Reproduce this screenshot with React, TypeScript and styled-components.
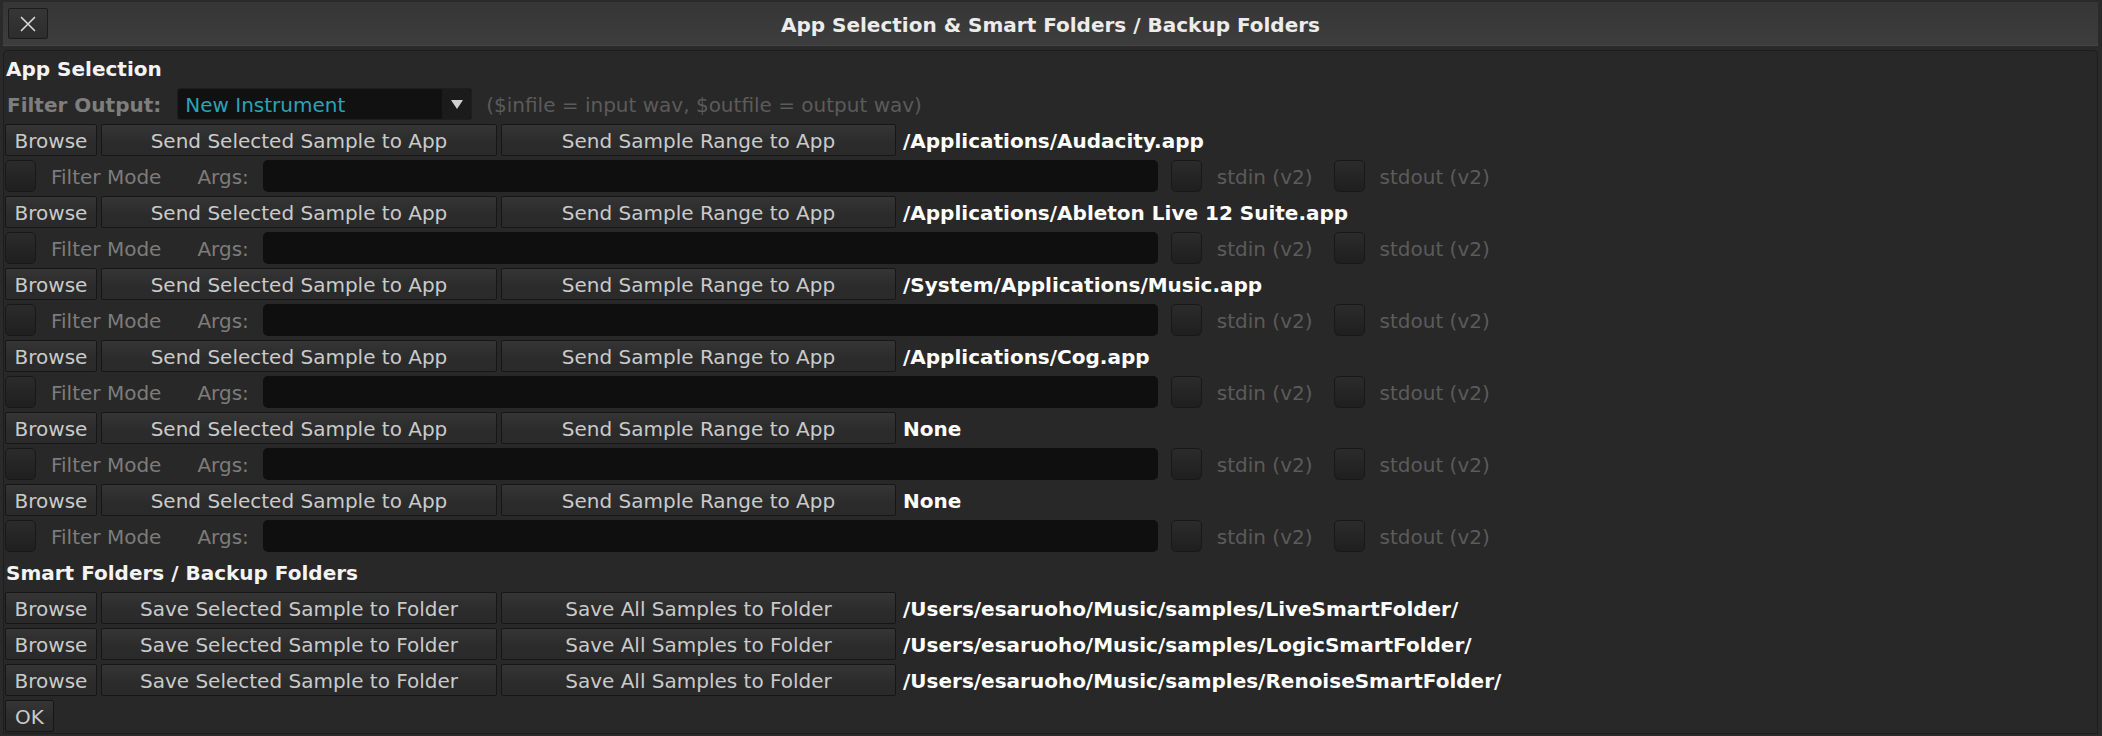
import React from 'react';
import styled, { createGlobalStyle } from 'styled-components';

const apps = [
  '/Applications/Audacity.app',
  '/Applications/Ableton Live 12 Suite.app',
  '/System/Applications/Music.app',
  '/Applications/Cog.app',
  'None',
  'None',
];

const folders = [
  '/Users/esaruoho/Music/samples/LiveSmartFolder/',
  '/Users/esaruoho/Music/samples/LogicSmartFolder/',
  '/Users/esaruoho/Music/samples/RenoiseSmartFolder/',
];

const GlobalStyle = createGlobalStyle`
  html, body {
    margin: 0;
    padding: 0;
    background: #2a2a2a;
  }
  body {
    font-family: "DejaVu Sans", "Liberation Sans", sans-serif;
    font-size: 20px;
  }
`;

function CloseIcon() {
  return (
    <svg width="20" height="20" viewBox="0 0 20 20">
      <path d="M3 3 L17 17 M17 3 L3 17" stroke="#d8d8d8" strokeWidth="1.6" fill="none" />
    </svg>
  );
}

function ArrowDown() {
  return (
    <svg width="14" height="12" viewBox="0 0 14 12">
      <path d="M1 2 L13 2 L7 11 Z" fill="#d0d0d0" />
    </svg>
  );
}

function AppRows({ path }: { path: string }) {
  return (
    <>
      <Row>
        <Button $width={92}>Browse</Button>
        <Button $width={396}>Send Selected Sample to App</Button>
        <Button $width={395}>Send Sample Range to App</Button>
        <PathText>{path}</PathText>
      </Row>
      <Row>
        <Checkbox />
        <DimLabel $left={15}>Filter Mode</DimLabel>
        <DimLabel $left={36}>Args:</DimLabel>
        <ArgsInput />
        <Checkbox $left={13} />
        <FaintLabel>stdin (v2)</FaintLabel>
        <Checkbox $left={21} />
        <FaintLabel>stdout (v2)</FaintLabel>
      </Row>
    </>
  );
}

function FolderRow({ path }: { path: string }) {
  return (
    <Row>
      <Button $width={92}>Browse</Button>
      <Button $width={396}>Save Selected Sample to Folder</Button>
      <Button $width={395}>Save All Samples to Folder</Button>
      <PathText>{path}</PathText>
    </Row>
  );
}

export default function App() {
  return (
    <>
      <GlobalStyle />
      <Window>
        <TitleBar>
          <CloseButton>
            <CloseIcon />
          </CloseButton>
          <Title>App Selection &amp; Smart Folders / Backup Folders</Title>
          <span />
        </TitleBar>
        <Panel>
          <Row>
            <SectionTitle>App Selection</SectionTitle>
          </Row>
          <Row>
            <FilterOutputLabel>Filter Output:</FilterOutputLabel>
            <Combo>
              <ComboValue>New Instrument</ComboValue>
              <ComboArrow>
                <ArrowDown />
              </ComboArrow>
            </Combo>
            <FaintLabel $left={14}>($infile = input wav, $outfile = output wav)</FaintLabel>
          </Row>
          {apps.map((p, i) => (
            <AppRows key={i} path={p} />
          ))}
          <Row>
            <SectionTitle>Smart Folders / Backup Folders</SectionTitle>
          </Row>
          {folders.map((p) => (
            <FolderRow key={p} path={p} />
          ))}
          <Row>
            <Button $width={49}>OK</Button>
          </Row>
        </Panel>
      </Window>
    </>
  );
}

const Window = styled.div`
  display: flex;
  flex-direction: column;
  width: 2102px;
  height: 736px;
  box-sizing: border-box;
  padding: 2px 4px 2px 3px;
  background: #2a2a2a;
  overflow: hidden;
`;

const TitleBar = styled.div`
  display: grid;
  grid-template-columns: 1fr auto 1fr;
  align-items: center;
  height: 43px;
  padding: 0 5px;
  background: linear-gradient(#363636, #3d3d3d);
  border-bottom: 1px solid #454545;
  flex-shrink: 0;
`;

const CloseButton = styled.div`
  display: flex;
  align-items: center;
  justify-content: center;
  width: 40px;
  height: 31px;
  box-sizing: border-box;
  border: 1px solid #1c1c1c;
  border-radius: 2px;
  background: linear-gradient(#363636, #2d2d2d);
`;

const Title = styled.div`
  padding-top: 3px;
  color: #ececec;
  font-weight: bold;
`;

const Panel = styled.div`
  display: flex;
  flex-direction: column;
  gap: 4px;
  flex: 1;
  margin-top: 4px;
  padding: 1px 0 0 1px;
  background: #282828;
  border: 1px solid #1d1d1d;
  border-radius: 4px 4px 0 0;
`;

const Row = styled.div`
  display: flex;
  align-items: center;
  height: 32px;
  flex-shrink: 0;
`;

const TextBit = styled.div`
  padding-top: 2px;
  white-space: nowrap;
`;

const SectionTitle = styled(TextBit)`
  padding-left: 1px;
  color: #f4f4f4;
  font-weight: bold;
`;

const Button = styled.div<{ $width: number }>`
  display: flex;
  align-items: center;
  justify-content: center;
  width: ${({ $width }) => $width}px;
  height: 32px;
  box-sizing: border-box;
  padding-top: 2px;
  margin-right: 4px;
  border: 1px solid #161616;
  border-radius: 2px;
  background: linear-gradient(#353535, #2b2b2b 60%, #2a2a2a);
  color: #cacaca;
  white-space: nowrap;
`;

const PathText = styled(TextBit)`
  margin-left: 3px;
  color: #ffffff;
  font-weight: bold;
`;

const Checkbox = styled.div<{ $left?: number }>`
  width: 31px;
  height: 32px;
  box-sizing: border-box;
  margin-left: ${({ $left }) => $left ?? 0}px;
  border: 1px solid #181818;
  border-radius: 5px;
  background: linear-gradient(#2b2b2b, #1f1f1f);
`;

const DimLabel = styled(TextBit)<{ $left: number }>`
  margin-left: ${({ $left }) => $left}px;
  color: #7c7c7c;
`;

const FaintLabel = styled(TextBit)<{ $left?: number }>`
  margin-left: ${({ $left }) => $left ?? 15}px;
  color: #5b5b5b;
`;

const ArgsInput = styled.div`
  width: 895px;
  height: 32px;
  margin-left: 14px;
  border-radius: 5px;
  background: #0f0f0f;
`;

const FilterOutputLabel = styled(TextBit)`
  margin-left: 2px;
  color: #7e7e7e;
  font-weight: bold;
`;

const Combo = styled.div`
  display: flex;
  align-items: center;
  width: 295px;
  height: 32px;
  box-sizing: border-box;
  margin-left: 16px;
  border: 1px solid #1e1e1e;
  border-radius: 3px;
  background: #111111;
`;

const ComboValue = styled(TextBit)`
  flex: 1;
  padding-left: 7px;
  color: #2aa3b6;
`;

const ComboArrow = styled.div`
  display: flex;
  align-items: center;
  justify-content: center;
  width: 29px;
  height: 100%;
  background: #1b1b1b;
  border-radius: 0 3px 3px 0;
`;
